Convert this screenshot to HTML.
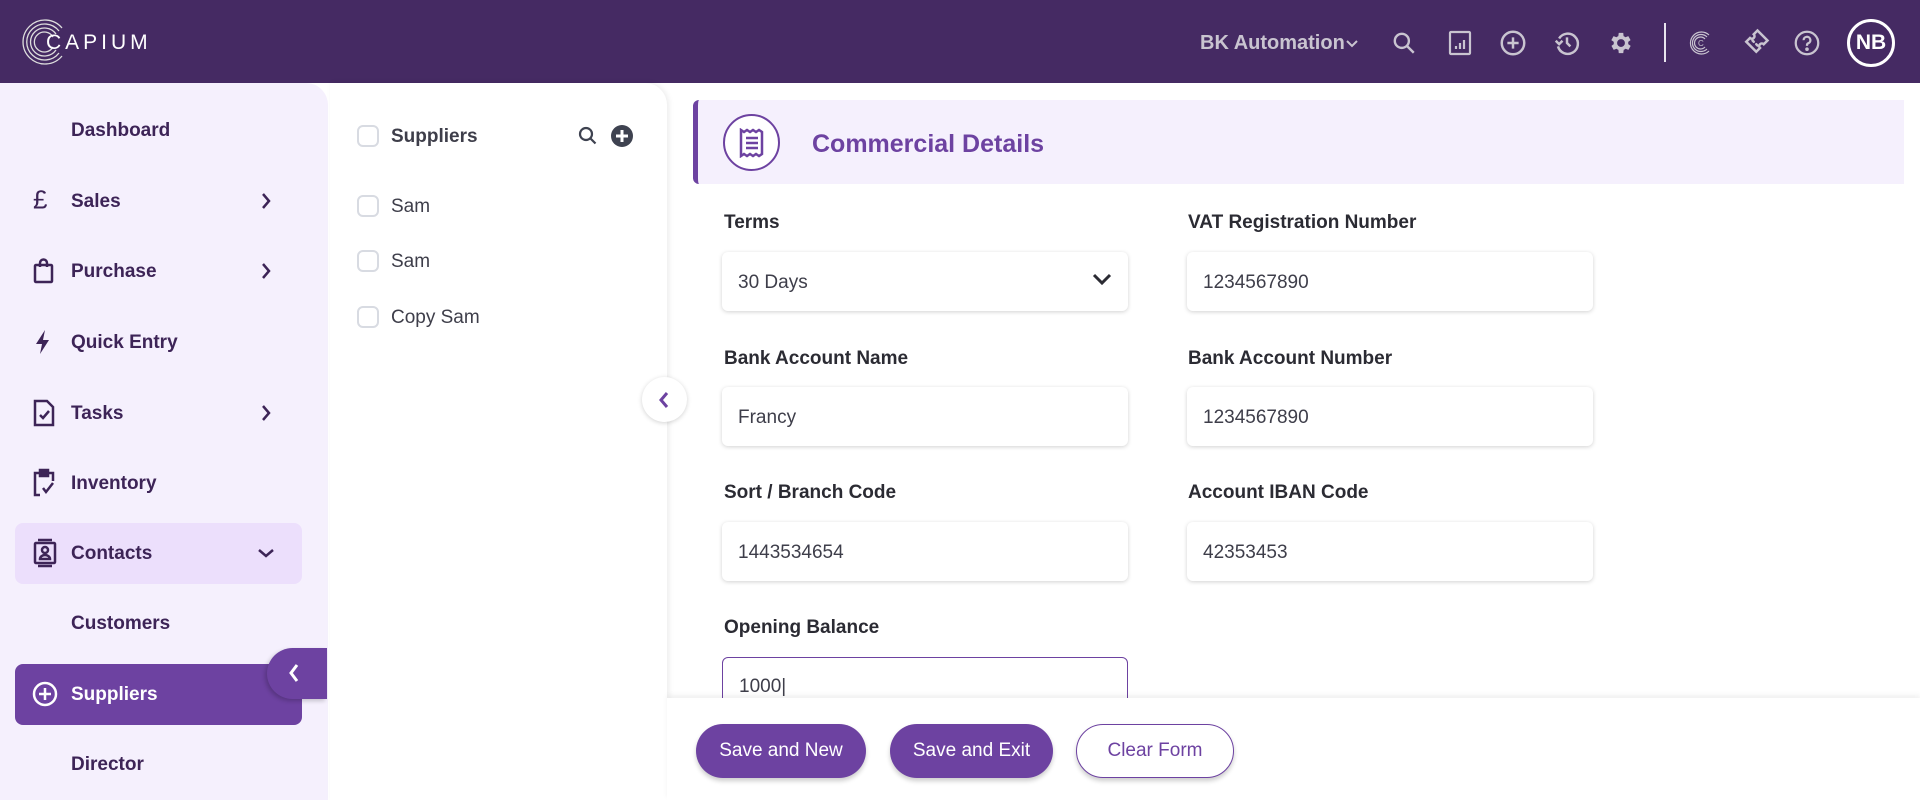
<!DOCTYPE html>
<html><head><meta charset="utf-8"><style>
*{box-sizing:border-box;margin:0;padding:0}
body{width:1920px;height:800px;overflow:hidden;background:#fff;font-family:"Liberation Sans",sans-serif;position:relative}
.hdr{position:absolute;left:0;top:0;width:1920px;height:83px;background:#452a63}
.abs{position:absolute}
.side{position:absolute;left:0;top:83px;width:328px;height:717px;background:#f5f0fd;border-top-right-radius:22px}
.nav{position:absolute;left:71px;font-size:19px;font-weight:bold;color:#3d2457;transform:translateY(-45%)}
.ico{position:absolute;left:32px;transform:translateY(-50%)}
.chev{position:absolute;left:260px;transform:translateY(-50%)}
.mid{position:absolute;left:330px;top:83px;width:337px;height:717px;background:#fff;border-top-right-radius:22px;box-shadow:2px 0 6px rgba(0,0,0,.08)}
.cb{position:absolute;left:357px;width:22px;height:22px;border:2px solid #d8dbe2;border-radius:6px;transform:translateY(-50%)}
.it{position:absolute;left:391px;font-size:19px;color:#3e3e4a;transform:translateY(-45%)}
.lab{position:absolute;font-size:19px;font-weight:bold;color:#2b2b33;transform:translateY(-45%)}
.inp{position:absolute;width:406px;height:59px;background:#fff;border-radius:6px;box-shadow:0 1px 4px rgba(0,0,0,.18);font-size:19px;color:#3e3e4a;padding-left:16px;line-height:61px}
.btn{position:absolute;top:724px;height:54px;border-radius:27px;font-size:19px;text-align:center;line-height:54px;box-shadow:0 3px 5px rgba(0,0,0,.2)}
.hi{position:absolute;top:43px;transform:translate(-50%,-50%)}
</style></head><body>
<div class="hdr"></div>
<svg class="abs" style="left:22px;top:18px" width="48" height="48" viewBox="0 0 48 48" fill="none" stroke="#ddd" stroke-width="1.3"><path d="M40 10A22 22 0 1 0 40 38"/><path d="M37 13A18 18 0 1 0 37 35"/><path d="M34 16A14 14 0 1 0 34 32"/><path d="M31 19A10 10 0 1 0 31 29"/></svg>
<div class="abs" style="left:46px;top:31px;font-size:21px;letter-spacing:4px;color:#fff">CAPIUM</div>
<div class="abs" style="left:1200px;top:32px;font-size:20px;font-weight:bold;color:#c9c4d0">BK Automation</div>
<svg class="abs" style="left:1345px;top:39px" width="14" height="10" viewBox="0 0 14 10"><path d="M2 2l5 5 5-5" stroke="#c9c4d0" stroke-width="2" fill="none"/></svg>
<svg class="hi" style="left:1404px" width="26" height="26" viewBox="0 0 24 24" fill="none" stroke="#c9c4d0" stroke-width="2.2"><circle cx="10" cy="10" r="6.5"/><path d="M15 15l6 6"/></svg>
<svg class="hi" style="left:1460px" width="24" height="26" viewBox="0 0 24 26" fill="none" stroke="#c9c4d0" stroke-width="2.2"><rect x="2" y="2" width="20" height="22" rx="1"/><path d="M8 19v-3M12 19v-6M16 19v-9"/></svg>
<svg class="hi" style="left:1513px" width="27" height="27" viewBox="0 0 24 24" fill="none" stroke="#c9c4d0" stroke-width="2.2"><circle cx="12" cy="12" r="10"/><path d="M12 7v10M7 12h10"/></svg>
<svg class="hi" style="left:1567px" width="27" height="27" viewBox="0 0 24 24" fill="none" stroke="#c9c4d0" stroke-width="2.2"><path d="M5 8A9 9 0 1 1 4 15"/><path d="M2 10l3 3 3-3"/><path d="M12 7v5l3 3"/></svg>
<svg class="hi" style="left:1621px" width="27" height="27" viewBox="0 0 24 24"><path fill="#c9c4d0" d="M19.4 13a7.5 7.5 0 0 0 0-2l2.1-1.6-2-3.5-2.5 1a7 7 0 0 0-1.7-1L15 3h-4l-.4 2.9a7 7 0 0 0-1.7 1l-2.5-1-2 3.5L6.6 11a7.5 7.5 0 0 0 0 2l-2.1 1.6 2 3.5 2.5-1a7 7 0 0 0 1.7 1L11 21h4l.4-2.9a7 7 0 0 0 1.7-1l2.5 1 2-3.5zM13 15.5a3.5 3.5 0 1 1 0-7 3.5 3.5 0 0 1 0 7z" transform="translate(-1 0)"/></svg>
<div class="abs" style="left:1664px;top:23px;width:2px;height:39px;background:#e8e4ee"></div>
<svg class="hi" style="left:1701px" width="28" height="28" viewBox="0 0 28 28" fill="none" stroke="#c9c4d0" stroke-width="1.2"><path d="M22 6A11 11 0 1 0 22 22"/><path d="M20 8A8.5 8.5 0 1 0 20 20"/><path d="M18 10A6 6 0 1 0 18 18"/><text x="11" y="17" font-size="8" fill="#c9c4d0" stroke="none" font-family="Liberation Sans">C</text></svg>
<svg class="hi" style="left:1755px" width="30" height="30" viewBox="0 0 24 24" fill="none" stroke="#c9c4d0" stroke-width="2"><path d="M14 2l8 8-3 3a2 2 0 0 0-3 3l-3 3-8-8 3-3a2 2 0 0 0 3-3z"/><path d="M10 10l1 1M13 13l1 1" stroke-linecap="round"/></svg>
<svg class="hi" style="left:1807px" width="27" height="27" viewBox="0 0 24 24" fill="none" stroke="#c9c4d0" stroke-width="2"><circle cx="12" cy="12" r="10"/><path d="M9 9.5a3 3 0 1 1 4 2.8c-.7.3-1 .9-1 1.7v.5"/><circle cx="12" cy="17.5" r=".6" fill="#c9c4d0"/></svg>
<div class="abs" style="left:1847px;top:19px;width:48px;height:48px;border:3px solid #fff;border-radius:50%;color:#fff;font-weight:bold;font-size:21px;text-align:center;line-height:42px">NB</div>

<div class="side"></div>
<div class="abs" style="left:15px;top:523px;width:287px;height:61px;background:#ecdffc;border-radius:8px"></div>
<div class="abs" style="left:15px;top:664px;width:287px;height:61px;background:#6d42a1;border-radius:8px"></div>
<div class="abs" style="left:267px;top:648px;width:60px;height:51px;background:#6d42a1;border-radius:26px 0 0 26px;box-shadow:-2px 2px 4px rgba(0,0,0,.2)"></div>
<svg class="abs" style="left:287px;top:662px" width="14" height="22" viewBox="0 0 14 22"><path d="M10 3L4 11l6 8" stroke="#fff" stroke-width="3" fill="none"/></svg>
<div class="nav" style="top:130px">Dashboard</div>
<div class="nav" style="top:201px">Sales</div>
<div class="nav" style="top:271px">Purchase</div>
<div class="nav" style="top:342px">Quick Entry</div>
<div class="nav" style="top:413px">Tasks</div>
<div class="nav" style="top:483px">Inventory</div>
<div class="nav" style="top:553px">Contacts</div>
<div class="nav" style="top:623px">Customers</div>
<div class="nav" style="top:694px;color:#fff">Suppliers</div>
<div class="nav" style="top:764px">Director</div>
<div class="ico" style="top:200px;font-size:26px;color:#3d2457;left:33px">£</div>
<svg class="ico" style="top:271px" width="24" height="26" viewBox="0 0 24 26" fill="none" stroke="#3d2457" stroke-width="2.5"><rect x="3" y="7" width="17" height="17" rx="1"/><path d="M8 9V5a3.5 3.5 0 0 1 7 0v4"/></svg>
<svg class="ico" style="top:342px" width="22" height="26" viewBox="0 0 22 26"><path fill="#3d2457" d="M13 1L4 15h6l-2 10 9-14h-6z"/></svg>
<svg class="ico" style="top:413px" width="24" height="28" viewBox="0 0 24 28" fill="none" stroke="#3d2457" stroke-width="2.5"><path d="M3 2h12l6 6v18H3z"/><path d="M8 16l3 3 6-7"/></svg>
<svg class="ico" style="top:483px" width="24" height="30" viewBox="0 0 24 30" fill="none" stroke="#3d2457" stroke-width="2.5"><path d="M7 5H3v22h5M17 5h4v8"/><rect x="8" y="2" width="8" height="6" fill="#3d2457"/><path d="M11 20l3 4 7-9"/></svg>
<svg class="ico" style="top:553px" width="26" height="30" viewBox="0 0 26 30" fill="none" stroke="#3d2457" stroke-width="2.5"><rect x="3" y="5" width="20" height="20" rx="1"/><path d="M6 2h14M6 28h14"/><circle cx="13" cy="12" r="3"/><path d="M8 21a5 4 0 0 1 10 0z"/></svg>
<svg class="ico" style="top:694px" width="26" height="26" viewBox="0 0 26 26" fill="none" stroke="#fff" stroke-width="2.5"><circle cx="13" cy="13" r="11"/><path d="M13 7v12M7 13h12"/></svg>
<svg class="chev" style="top:201px" width="12" height="18" viewBox="0 0 12 18"><path d="M3 2l6 7-6 7" stroke="#3d2457" stroke-width="2.5" fill="none"/></svg>
<svg class="chev" style="top:271px" width="12" height="18" viewBox="0 0 12 18"><path d="M3 2l6 7-6 7" stroke="#3d2457" stroke-width="2.5" fill="none"/></svg>
<svg class="chev" style="top:413px" width="12" height="18" viewBox="0 0 12 18"><path d="M3 2l6 7-6 7" stroke="#3d2457" stroke-width="2.5" fill="none"/></svg>
<svg class="chev" style="top:553px;left:257px" width="18" height="12" viewBox="0 0 18 12"><path d="M2 3l7 6 7-6" stroke="#3d2457" stroke-width="2.5" fill="none"/></svg>

<div class="mid"></div>
<div class="cb" style="top:136px"></div><div class="it" style="top:136px;font-weight:bold">Suppliers</div>
<div class="cb" style="top:206px"></div><div class="it" style="top:206px">Sam</div>
<div class="cb" style="top:261px"></div><div class="it" style="top:261px">Sam</div>
<div class="cb" style="top:317px"></div><div class="it" style="top:317px">Copy Sam</div>
<svg class="abs" style="left:576px;top:124px" width="24" height="24" viewBox="0 0 24 24" fill="none" stroke="#3e4250" stroke-width="2.2"><circle cx="10" cy="10" r="6"/><path d="M14.5 14.5l5 5"/></svg>
<svg class="abs" style="left:610px;top:124px" width="24" height="24" viewBox="0 0 24 24"><circle cx="12" cy="12" r="11" fill="#3e4250"/><path d="M12 6v12M6 12h12" stroke="#fff" stroke-width="3"/></svg>
<div class="abs" style="left:642px;top:377px;width:45px;height:45px;border-radius:50%;background:#fff;box-shadow:0 1px 5px rgba(0,0,0,.18)"></div>
<svg class="abs" style="left:657px;top:390px" width="14" height="20" viewBox="0 0 14 20"><path d="M10 3L4 10l6 7" stroke="#6d42a1" stroke-width="3" fill="none"/></svg>

<div class="abs" style="left:693px;top:100px;width:1211px;height:84px;background:#f5f0fd;border-left:5px solid #6d42a1;border-radius:6px 0 0 6px"></div>
<div class="abs" style="left:723px;top:114px;width:57px;height:57px;border-radius:50%;border:2px solid #6d42a1;background:#fff"></div>
<svg class="abs" style="left:738px;top:128px" width="28" height="30" viewBox="0 0 28 30" fill="none" stroke="#6d42a1" stroke-width="2.5"><path d="M3 2l3 2 3-2 3 2 3-2 3 2 3-2 3 2v22l-3 2-3-2-3 2-3-2-3 2-3-2-3 2z"/><path d="M8 10h12M8 15h12M8 20h12"/></svg>
<div class="abs" style="left:812px;top:130px;font-size:25px;font-weight:bold;color:#6d42a1">Commercial Details</div>

<div class="lab" style="left:724px;top:222px">Terms</div>
<div class="lab" style="left:1188px;top:222px">VAT Registration Number</div>
<div class="inp" style="left:722px;top:252px">30 Days</div>
<svg class="abs" style="left:1092px;top:272px" width="20" height="14" viewBox="0 0 20 14"><path d="M2 3l8 8 8-8" stroke="#2b2b33" stroke-width="3" fill="none"/></svg>
<div class="inp" style="left:1187px;top:252px">1234567890</div>
<div class="lab" style="left:724px;top:358px">Bank Account Name</div>
<div class="lab" style="left:1188px;top:358px">Bank Account Number</div>
<div class="inp" style="left:722px;top:387px">Francy</div>
<div class="inp" style="left:1187px;top:387px">1234567890</div>
<div class="lab" style="left:724px;top:492px">Sort / Branch Code</div>
<div class="lab" style="left:1188px;top:492px">Account IBAN Code</div>
<div class="inp" style="left:722px;top:522px">1443534654</div>
<div class="inp" style="left:1187px;top:522px">42353453</div>
<div class="lab" style="left:724px;top:627px">Opening Balance</div>
<div class="abs" style="left:722px;top:657px;width:406px;height:41px;overflow:hidden"><div style="width:406px;height:59px;border:1.5px solid #6d42a1;border-radius:6px;font-size:19px;color:#3e3e4a;padding:18px 0 0 16px">1000|</div></div>
<div class="abs" style="left:667px;top:698px;width:1253px;height:102px;background:#fff;box-shadow:0 -3px 5px rgba(0,0,0,.06)"></div>
<div class="btn" style="left:696px;width:170px;background:#6d42a1;color:#fff">Save and New</div>
<div class="btn" style="left:890px;width:163px;background:#6d42a1;color:#fff">Save and Exit</div>
<div class="btn" style="left:1076px;width:158px;background:#fff;border:1.5px solid #6d42a1;color:#6d42a1;line-height:51px">Clear Form</div>
</body></html>
